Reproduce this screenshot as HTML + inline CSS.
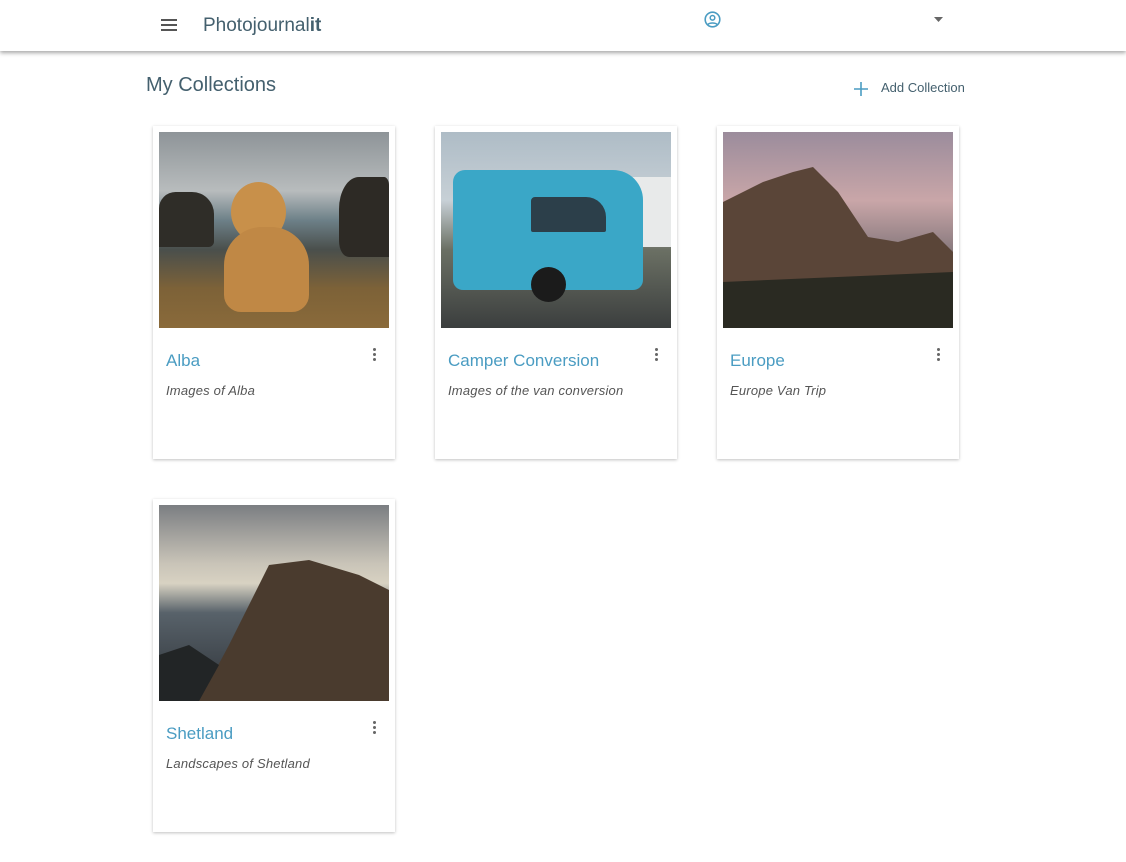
<!DOCTYPE html>
<html><head><style>
*{margin:0;padding:0;box-sizing:border-box}
body{width:1126px;height:862px;background:#fff;font-family:"Liberation Sans",sans-serif;position:relative;overflow:hidden}
.hdr{position:absolute;left:0;top:0;width:1126px;height:51px;background:#fff;box-shadow:0 2px 4px rgba(0,0,0,.35);z-index:2}
.card{position:absolute;width:242px;height:333px;background:#fff;box-shadow:0 1px 3px rgba(0,0,0,.25)}
.img{position:absolute;left:6px;top:6px;width:230px;height:196px;overflow:hidden}
.t{position:absolute;left:13px;top:225px;font-size:17px;color:#4a9cc2}
.d{position:absolute;left:13px;top:257px;font-size:13px;font-style:italic;color:#555;letter-spacing:.2px}
.dots{position:absolute;left:220px;top:222px;width:3px}
.dots i{display:block;width:3px;height:3px;border-radius:50%;background:#666;margin-bottom:2px}
</style></head><body>
<div class="hdr">
 <svg style="position:absolute;left:161px;top:19px" width="16" height="12"><rect y="0" width="16" height="2" fill="#555"/><rect y="5" width="16" height="2" fill="#555"/><rect y="10" width="16" height="2" fill="#555"/></svg>
 <div style="position:absolute;left:203px;top:15px;font-size:19px;color:#44606e">Photojournal<b>it</b></div>
 <svg style="position:absolute;left:704px;top:11px" width="17" height="17" viewBox="0 0 17 17"><circle cx="8.5" cy="8.5" r="7.3" fill="none" stroke="#4a9cc2" stroke-width="1.6"/><circle cx="8.5" cy="6.8" r="2.3" fill="none" stroke="#4a9cc2" stroke-width="1.5"/><path d="M4 13.5c1.5-2 7.5-2 9 0" fill="none" stroke="#4a9cc2" stroke-width="1.5"/></svg>
 <svg style="position:absolute;left:934px;top:17px" width="9" height="5"><path d="M0 0h9L4.5 5z" fill="#666"/></svg>
</div>
<div style="position:absolute;left:146px;top:74px;font-size:20px;color:#44606e">My Collections</div>
<svg style="position:absolute;left:854px;top:82px" width="14" height="14"><path d="M7 0v14M0 7h14" stroke="#4a9cc2" stroke-width="1.6"/></svg>
<div style="position:absolute;left:881px;top:80px;font-size:13px;color:#44606e">Add Collection</div>

<div class="card" style="left:153px;top:126px">
 <div class="img" style="background:linear-gradient(180deg,#8e9498 0%,#b8bcbd 30%,#6d8088 45%,#4a4f4c 60%,#7d6238 80%,#8a6a3a 100%)">
  <div style="position:absolute;left:0;top:60px;width:55px;height:55px;background:#2f2d28;border-radius:30% 40% 10% 0"></div>
  <div style="position:absolute;right:0;top:45px;width:50px;height:80px;background:#2d2a25;border-radius:40% 10% 0 20%"></div>
  <div style="position:absolute;left:72px;top:50px;width:55px;height:60px;background:#c8904a;border-radius:50%"></div>
  <div style="position:absolute;left:65px;top:95px;width:85px;height:85px;background:#c08845;border-radius:45% 45% 20% 20%"></div>
 </div>
 <div class="t">Alba</div><div class="d">Images of Alba</div><div class="dots"><i></i><i></i><i></i></div>
</div>

<div class="card" style="left:435px;top:126px">
 <div class="img" style="background:linear-gradient(180deg,#aebcc6 0%,#c7d0d6 35%,#6b7064 60%,#3b3e3e 100%)">
  <div style="position:absolute;right:0;top:45px;width:60px;height:70px;background:#e8eaea"></div>
  <div style="position:absolute;left:12px;top:38px;width:190px;height:120px;background:#3aa7c7;border-radius:12px 30px 10px 10px"></div>
  <div style="position:absolute;left:90px;top:65px;width:75px;height:35px;background:#2c3f4a;border-radius:4px 20px 2px 2px"></div>
  <div style="position:absolute;left:90px;top:135px;width:35px;height:35px;background:#1b1b1b;border-radius:50%"></div>
 </div>
 <div class="t">Camper Conversion</div><div class="d">Images of the van conversion</div><div class="dots"><i></i><i></i><i></i></div>
</div>

<div class="card" style="left:717px;top:126px">
 <div class="img" style="background:linear-gradient(180deg,#9b8c9c 0%,#c9a6a8 35%,#8a7b7f 60%,#3a3630 80%,#1f1f1a 100%)">
  <svg width="230" height="196" style="position:absolute;left:0;top:0"><path d="M0 70 L40 50 L70 40 L90 35 L115 60 L145 105 L175 110 L210 100 L230 120 L230 170 L0 175Z" fill="#5a4538"/><path d="M0 150 L230 140 L230 196 L0 196Z" fill="#2a2a22"/></svg>
 </div>
 <div class="t">Europe</div><div class="d">Europe Van Trip</div><div class="dots"><i></i><i></i><i></i></div>
</div>

<div class="card" style="left:153px;top:499px">
 <div class="img" style="background:linear-gradient(180deg,#7b7e82 0%,#c9c4b8 30%,#d8d2c2 40%,#58626a 55%,#2d3136 100%)">
  <svg width="230" height="196" style="position:absolute;left:0;top:0"><path d="M40 196 L70 140 L110 60 L150 55 L200 70 L230 85 L230 196Z" fill="#4a3b2e"/><path d="M0 150 L30 140 L60 160 L40 196 L0 196Z" fill="#222526"/></svg>
 </div>
 <div class="t">Shetland</div><div class="d">Landscapes of Shetland</div><div class="dots"><i></i><i></i><i></i></div>
</div>
</body></html>
